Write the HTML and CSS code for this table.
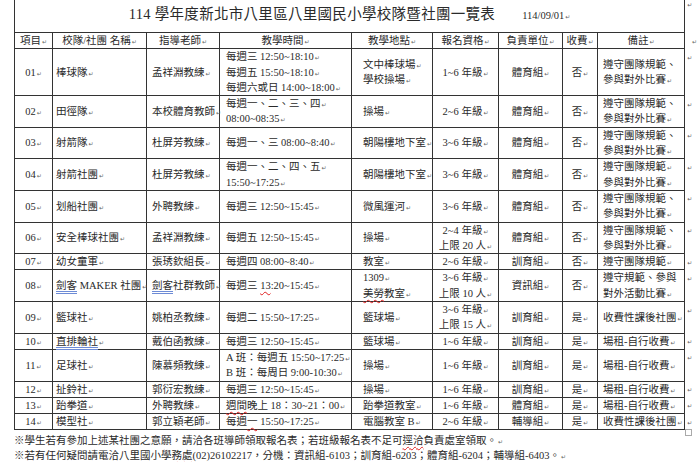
FILE: index.html
```html
<!DOCTYPE html>
<html lang="zh-Hant">
<head>
<meta charset="utf-8">
<title>114 學年度新北市八里區八里國民小學校隊暨社團一覽表</title>
<link rel="stylesheet" href="styles.css">
</head>
<body>
<div class="page">
  <div class="wrap">
    <table class="t">
      <colgroup>
        <col class="w-no"><col class="w-name"><col class="w-tch"><col class="w-time"><col class="w-loc"><col class="w-req"><col class="w-unit"><col class="w-fee"><col class="w-rm"><col class="w-re">
      </colgroup>
      <tr class="title-row">
        <td class="ttl" colspan="9"><span class="title">114 學年度新北市八里區八里國民小學校隊暨社團一覽表</span><span class="date p">114/09/01</span></td>
        <td class="re"></td>
      </tr>
      <tr class="hd">
        <td><div class="p">項目</div></td>
        <td><div class="p">校隊/社團 名稱</div></td>
        <td><div class="p">指導老師</div></td>
        <td><div class="p">教學時間</div></td>
        <td><div class="p">教學地點</div></td>
        <td><div class="p">報名資格</div></td>
        <td><div class="p">負責單位</div></td>
        <td><div class="p">收費</div></td>
        <td><div class="p">備註</div></td>
        <td class="re"></td>
      </tr>
      <tr class="r">
        <td><div class="p">01</div></td>
        <td><div class="p">棒球隊</div></td>
        <td><div class="p">孟祥淵教練</div></td>
        <td><div class="p">每週三 12:50~18:10</div><div class="p">每週五 15:50~18:10</div><div class="p">每週六或日 14:00~18:00</div></td>
        <td><div class="p">文中棒球場</div><div class="p">學校操場</div></td>
        <td><div class="p">1~6 年級</div></td>
        <td><div class="p">體育組</div></td>
        <td><div class="p">否</div></td>
        <td><div class="p">遵守團隊規範、<br>參與對外比賽</div></td>
        <td class="re"></td>
      </tr>
      <tr class="r">
        <td><div class="p">02</div></td>
        <td><div class="p">田徑隊</div></td>
        <td><div class="p">本校體育教師</div></td>
        <td><div class="p">每週一、二、三、四</div><div class="p">08:00~08:35</div></td>
        <td><div class="p">操場</div></td>
        <td><div class="p">2~6 年級</div></td>
        <td><div class="p">體育組</div></td>
        <td><div class="p">否</div></td>
        <td><div class="p">遵守團隊規範、<br>參與對外比賽</div></td>
        <td class="re"></td>
      </tr>
      <tr class="r">
        <td><div class="p">03</div></td>
        <td><div class="p">射箭隊</div></td>
        <td><div class="p">杜屏芳教練</div></td>
        <td><div class="p">每週一、三 08:00~8:40</div></td>
        <td><div class="p">朝陽樓地下室</div></td>
        <td><div class="p">3~6 年級</div></td>
        <td><div class="p">體育組</div></td>
        <td><div class="p">否</div></td>
        <td><div class="p">遵守團隊規範、<br>參與對外比賽</div></td>
        <td class="re"></td>
      </tr>
      <tr class="r">
        <td><div class="p">04</div></td>
        <td><div class="p">射箭社團</div></td>
        <td><div class="p">杜屏芳教練</div></td>
        <td><div class="p">每週一、二、四、五</div><div class="p">15:50~17:25</div></td>
        <td><div class="p">朝陽樓地下室</div></td>
        <td><div class="p">3~6 年級</div></td>
        <td><div class="p">體育組</div></td>
        <td><div class="p">否</div></td>
        <td><div class="p">遵守團隊規範</div><div class="p">參與對外比賽</div></td>
        <td class="re"></td>
      </tr>
      <tr class="r">
        <td><div class="p">05</div></td>
        <td><div class="p">划船社團</div></td>
        <td><div class="p">外聘教練</div></td>
        <td><div class="p">每週三 12:50~15:45</div></td>
        <td><div class="p">微風運河</div></td>
        <td><div class="p">3~6 年級</div></td>
        <td><div class="p">體育組</div></td>
        <td><div class="p">否</div></td>
        <td><div class="p">遵守團隊規範、<br>參與對外比賽</div></td>
        <td class="re"></td>
      </tr>
      <tr class="r">
        <td><div class="p">06</div></td>
        <td><div class="p">安全棒球社團</div></td>
        <td><div class="p">孟祥淵教練</div></td>
        <td><div class="p">每週五 12:50~15:45</div></td>
        <td><div class="p">操場</div></td>
        <td><div class="p">2~4 年級</div><div class="p">上限 20 人</div></td>
        <td><div class="p">體育組</div></td>
        <td><div class="p">否</div></td>
        <td><div class="p">遵守團隊規範、<br>參與對外比賽</div></td>
        <td class="re"></td>
      </tr>
      <tr class="r">
        <td><div class="p">07</div></td>
        <td><div class="p">幼女童軍</div></td>
        <td><div class="p">張琇欽組長</div></td>
        <td><div class="p">每週四 08:00~8:40</div></td>
        <td><div class="p">教室</div></td>
        <td><div class="p">2~6 年級</div></td>
        <td><div class="p">訓育組</div></td>
        <td><div class="p">否</div></td>
        <td><div class="p">遵守團隊規範</div></td>
        <td class="re"></td>
      </tr>
      <tr class="r">
        <td><div class="p">08</div></td>
        <td><div class="p"><span class="gram">劍客</span> MAKER 社團</div></td>
        <td><div class="p"><span class="gram">劍客</span>社群教師</div></td>
        <td><div class="p">每週三 <span class="spell">13</span>:20~15:45</div></td>
        <td><div class="p">1309</div><div class="p"><span class="spell">美勞</span>教室</div></td>
        <td><div class="p">3~6 年級</div><div class="p">上限 10 人</div></td>
        <td><div class="p">資訊組</div></td>
        <td><div class="p">否</div></td>
        <td><div class="p">遵守規範、參與<br>對外活動比賽</div></td>
        <td class="re"></td>
      </tr>
      <tr class="r">
        <td><div class="p">09</div></td>
        <td><div class="p">籃球社</div></td>
        <td><div class="p">姚柏丞教練</div></td>
        <td><div class="p">每週二 15:50~17:25</div></td>
        <td><div class="p">籃球場</div></td>
        <td><div class="p">3~6 年級</div><div class="p">上限 15 人</div></td>
        <td><div class="p">訓育組</div></td>
        <td><div class="p">是</div></td>
        <td><div class="p">收費性課後社團</div></td>
        <td class="re"></td>
      </tr>
      <tr class="r">
        <td><div class="p">10</div></td>
        <td><div class="p"><span class="gram">直排輪社</span></div></td>
        <td><div class="p">戴伯函教練</div></td>
        <td><div class="p">每週三 12:50~15:45</div></td>
        <td><div class="p">籃球場</div></td>
        <td><div class="p">1~6 年級</div></td>
        <td><div class="p">訓育組</div></td>
        <td><div class="p">是</div></td>
        <td><div class="p">場租-自行收費</div></td>
        <td class="re"></td>
      </tr>
      <tr class="r">
        <td><div class="p">11</div></td>
        <td><div class="p">足球社</div></td>
        <td><div class="p">陳慕頻教練</div></td>
        <td><div class="p">A 班：每週五 15:50~17:25</div><div class="p">B 班：每周日 9:00-10:30</div></td>
        <td><div class="p">操場</div></td>
        <td><div class="p">1~6 年級</div></td>
        <td><div class="p">訓育組</div></td>
        <td><div class="p">是</div></td>
        <td><div class="p">場租-自行收費</div></td>
        <td class="re"></td>
      </tr>
      <tr class="r">
        <td><div class="p">12</div></td>
        <td><div class="p">扯鈴社</div></td>
        <td><div class="p">郭衍宏教練</div></td>
        <td><div class="p">每週三 12:50~15:45</div></td>
        <td><div class="p">操場</div></td>
        <td><div class="p">1~6 年級</div></td>
        <td><div class="p">訓育組</div></td>
        <td><div class="p">是</div></td>
        <td><div class="p">場租-自行收費</div></td>
        <td class="re"></td>
      </tr>
      <tr class="r">
        <td><div class="p">13</div></td>
        <td><div class="p">跆拳道</div></td>
        <td><div class="p">外聘教練</div></td>
        <td><div class="p"><span class="spell">週間</span>晚上 18：30~21：00</div></td>
        <td><div class="p">跆拳道教室</div></td>
        <td><div class="p">1~6 年級</div></td>
        <td><div class="p">體育組</div></td>
        <td><div class="p">是</div></td>
        <td><div class="p">場租-自行收費</div></td>
        <td class="re"></td>
      </tr>
      <tr class="r">
        <td><div class="p">14</div></td>
        <td><div class="p">模型社</div></td>
        <td><div class="p">郭立穎老師</div></td>
        <td><div class="p">每週<span class="spell">一</span> 15:50~17:25</div></td>
        <td><div class="p">電腦教室 B</div></td>
        <td><div class="p">2~6 年級</div></td>
        <td><div class="p">輔導組</div></td>
        <td><div class="p">是</div></td>
        <td><div class="p">收費性課後社團</div></td>
        <td class="re"></td>
      </tr>
    </table>
    <span class="handle"></span>
  </div>
  <p class="note p">※學生若有參加上述某社團之意願，請洽各班導師領取報名表；若班級報名表不足可<span class="spell">逕洽</span>負責處室領取。</p>
  <p class="note p">※若有任何疑問請電洽八里國小學<span class="spell">務處</span>(02)26102217，分機：資訊組-6103；訓育組-6203；體育組-6204；輔導組-6403。</p>
</div>
</body>
</html>
```

FILE: styles.css
```css
html, body {
  margin: 0;
  padding: 0;
  background: #ffffff;
}

body {
  font-family: "Liberation Serif", "Noto Sans CJK TC", serif;
  color: #2a2a2a;
}

.page {
  padding-left: 14px;
}

.wrap {
  position: relative;
  width: 672px;
}

.t {
  border-collapse: collapse;
  table-layout: fixed;
  width: 688px;
  font-size: 10.5px;
  line-height: 15.3px;
}

.w-no { width: 38px; }
.w-name { width: 94px; }
.w-tch { width: 73px; }
.w-time { width: 132px; }
.w-loc { width: 81px; }
.w-req { width: 66px; }
.w-unit { width: 64px; }
.w-fee { width: 35px; }
.w-rm { width: 87px; }
.w-re { width: 18px; }

.t td {
  border: 1px solid #333333;
  padding: 0 3px;
  vertical-align: middle;
  white-space: nowrap;
  overflow: visible;
}

.t td.re {
  border: none;
  vertical-align: top;
  padding: 0 0 0 2px;
}

.t td.re::after {
  content: "\21B5";
  font-family: "DejaVu Sans", sans-serif;
  font-size: 6px;
  line-height: 0;
  color: #666;
}

.title-row td.re {
  line-height: 8px;
}

.ttl {
  border-top: hidden !important;
  height: 30px;
  text-align: center;
  padding: 0 0 2px 0 !important;
  line-height: 18px;
}

.title {
  font-size: 14.5px;
  letter-spacing: 0.3px;
}

.date {
  font-size: 10.5px;
  margin-left: 27px;
}

.p::after {
  content: "\21B5";
  font-family: "DejaVu Sans", sans-serif;
  font-size: 6px;
  line-height: 0;
  color: #666;
  margin-left: 1px;
}

.hd td {
  text-align: center;
}

.r td:nth-child(1),
.r td:nth-child(6),
.r td:nth-child(7),
.r td:nth-child(8) {
  text-align: center;
}

.r td:nth-child(2) { padding-left: 3px; }
.r td:nth-child(3) { padding-left: 5px; }
.r td:nth-child(4) { padding-left: 6px; }
.r td:nth-child(5) { padding-left: 11px; }
.r td:nth-child(9) { padding-left: 5px; }

.gram {
  text-decoration: underline double #6d8bd6;
  text-decoration-thickness: 1px;
  text-underline-offset: 2px;
}

.spell {
  text-decoration: underline wavy #e02020;
  text-decoration-thickness: 1px;
  text-underline-offset: 2px;
}

.handle {
  position: absolute;
  right: -6px;
  bottom: -6px;
  width: 5px;
  height: 5px;
  border: 1px solid #aaa;
  background: #fff;
}

.note {
  margin: 0;
  font-size: 10.5px;
  line-height: 15px;
  white-space: nowrap;
}

.note:first-of-type {
  margin-top: 3px;
}
```
